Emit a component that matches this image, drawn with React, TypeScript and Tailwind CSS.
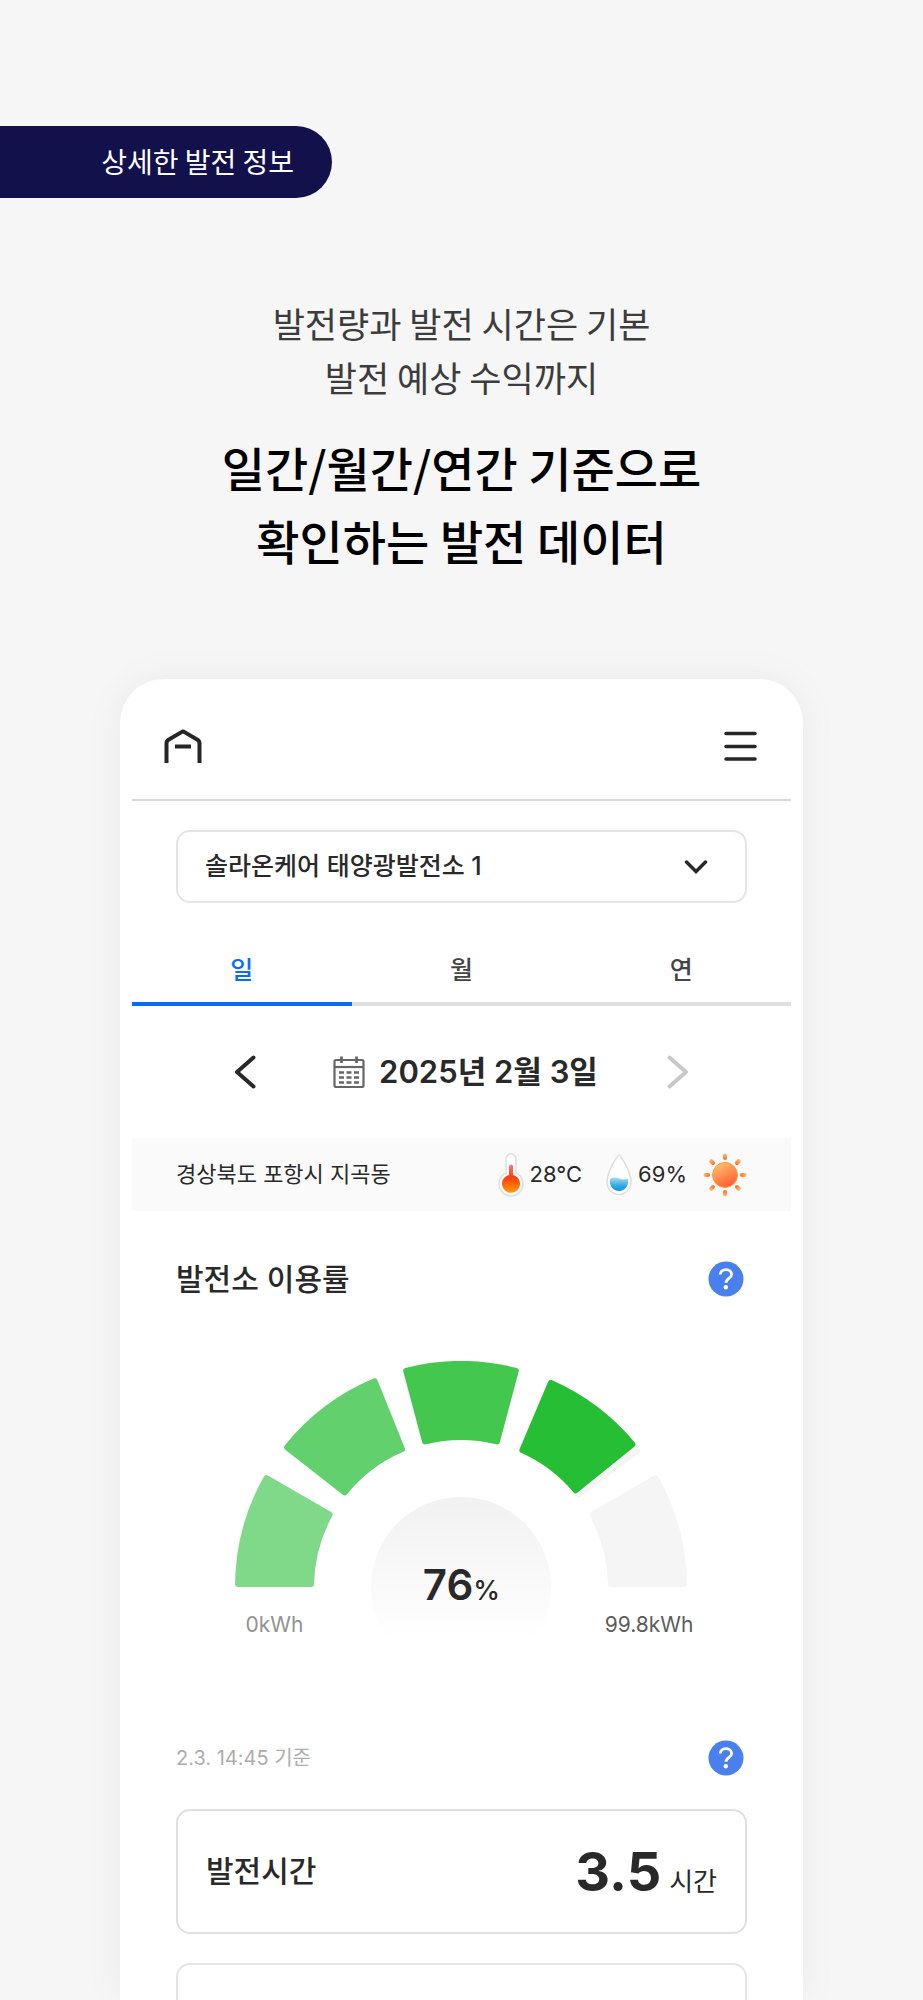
import React, { useState } from 'react';

type Period = 'day' | 'month' | 'year';

const PERIODS: { id: Period; label: string }[] = [
  { id: 'day', label: '일' },
  { id: 'month', label: '월' },
  { id: 'year', label: '연' },
];

interface Segment {
  from: number;
  to: number;
  color: string;
}

// angles in degrees, 0 = left end of the gauge, 180 = right end
const SEGMENTS: Segment[] = [
  { from: 0, to: 30, color: '#7fd989' },
  { from: 38, to: 68, color: '#62d16d' },
  { from: 75, to: 105, color: '#43c74f' },
  { from: 113, to: 143, color: '#f5f5f5' },
  { from: 113, to: 141, color: '#25be34' },
  { from: 150, to: 180, color: '#f5f5f5' },
];

const CX = 226;
const CY = 226;
const OUTER = 226;
const INNER = 147;
const ROUND = 3;

const point = (radius: number, degrees: number) => {
  const a = (degrees * Math.PI) / 180;
  return `${(CX - radius * Math.cos(a)).toFixed(2)} ${(CY - radius * Math.sin(a)).toFixed(2)}`;
};

// Segment outline pulled in by ROUND, the round-joined stroke fills it back out
const segmentPath = ({ from, to }: Segment) => {
  const ro = OUTER - ROUND;
  const ri = INNER + ROUND;
  const dOuter = (Math.asin(ROUND / ro) * 180) / Math.PI;
  const dInner = (Math.asin(ROUND / ri) * 180) / Math.PI;
  return [
    `M${point(ro, from + dOuter)}`,
    `A${ro} ${ro} 0 0 1 ${point(ro, to - dOuter)}`,
    `L${point(ri, to - dInner)}`,
    `A${ri} ${ri} 0 0 0 ${point(ri, from + dInner)}`,
    'Z',
  ].join(' ');
};

const HomeIcon = () => (
  <svg className="h-9 w-10" viewBox="0 0 40 36" fill="none" stroke="#262626" strokeWidth="4" strokeLinejoin="round">
    <path d="M3.5 35V15.5Q3.5 13 5.5 11.8L18.5 4.1Q20 3.2 21.5 4.1L34.5 11.8Q36.5 13 36.5 15.5V35" />
    <path d="M12 18.5H28" />
  </svg>
);

const MenuIcon = () => (
  <svg className="h-8 w-9" viewBox="0 0 36 32" fill="none" stroke="#262626" strokeWidth="3.5" strokeLinecap="round">
    <path d="M2 3.5H31M2 16.5H31M2 29H31" />
  </svg>
);

const CalendarIcon = () => (
  <svg className="h-8 w-8" viewBox="0 0 32 32" fill="none" stroke="#666" strokeWidth="2.2">
    <rect x="1.5" y="4" width="29" height="27" rx="1.5" />
    <path d="M1.5 11H30.5" />
    <path d="M8.5 0.5V7M23.5 0.5V7" strokeWidth="2.8" />
    <path d="M6 16.5H11M13.5 16.5H18.5M21 16.5H26M6 21.5H11M13.5 21.5H18.5M21 21.5H26M6 26.5H11M13.5 26.5H18.5M21 26.5H26" strokeWidth="2.6" />
  </svg>
);

const ThermometerIcon = () => (
  <svg className="h-11 w-[26px]" viewBox="0 0 26 44">
    <defs>
      <linearGradient id="heat" x1="0" y1="0" x2="0" y2="1">
        <stop offset="0" stopColor="#ff7a70" />
        <stop offset="0.45" stopColor="#ff3b14" />
        <stop offset="1" stopColor="#ff9d00" />
      </linearGradient>
    </defs>
    <path d="M8 20V6A5 5 0 0 1 18 6V20A12 12 0 1 1 8 20Z" fill="#fff" stroke="#dedede" strokeWidth="1.5" />
    <path d="M11 22V13.5A2 2 0 0 1 15 13.5V22A9 9 0 1 1 11 22Z" fill="url(#heat)" />
  </svg>
);

const DropIcon = () => (
  <svg className="block h-11 w-[26px]" viewBox="0 0 26 44">
    <defs>
      <linearGradient id="water" x1="0" y1="0" x2="0" y2="1">
        <stop offset="0" stopColor="#a5dcf3" />
        <stop offset="0.6" stopColor="#2fa9e6" />
        <stop offset="1" stopColor="#1596e0" />
      </linearGradient>
    </defs>
    <path d="M13 2C14 2 25 18 25 29A12 12.5 0 0 1 1 29C1 18 12 2 13 2Z" fill="#fff" stroke="#dedede" strokeWidth="1.5" />
    <path d="M4 26Q8.5 23.5 13 25.5Q18 27.5 22 25.5C23 33 19 38 13 38S3 33 4 26Z" fill="url(#water)" />
  </svg>
);

const RAYS = [0, 45, 90, 135, 180, 225, 270, 315];

const SunIcon = () => (
  <svg className="h-11 w-11" viewBox="0 0 44 44">
    <defs>
      <linearGradient id="sun" x1="0.2" y1="0" x2="0.7" y2="1">
        <stop offset="0" stopColor="#ffc370" />
        <stop offset="1" stopColor="#ff5a30" />
      </linearGradient>
      <linearGradient id="ray" x1="0" y1="0" x2="0" y2="1">
        <stop offset="0" stopColor="#ffc080" />
        <stop offset="1" stopColor="#ff6a10" />
      </linearGradient>
    </defs>
    {RAYS.map((angle) => (
      <rect key={angle} x="20" y="0.5" width="4" height="6.5" rx="2" fill="url(#ray)" transform={`rotate(${angle} 22 22)`} />
    ))}
    <circle cx="22" cy="22" r="12.5" fill="url(#sun)" stroke="#ff9a40" />
  </svg>
);

const HelpButton = ({ label }: { label: string }) => (
  <button type="button" aria-label={label} className="mr-[3px] shrink-0">
    <svg className="h-9 w-9" viewBox="0 0 36 36" fill="none">
      <circle cx="18" cy="18" r="17.5" fill="#4a80ee" />
      <path d="M12.3 13.6C12.3 10.6 14.6 8.7 17.9 8.7C21.3 8.7 23.6 10.7 23.6 13.5C23.6 17.4 18 17.2 18 21.8" stroke="#fff" strokeWidth="2.8" />
      <circle cx="17.8" cy="26.3" r="2.2" fill="#fff" />
    </svg>
  </button>
);

const UtilizationGauge = ({ percent }: { percent: number }) => (
  <div className="mx-auto w-[460px] max-w-full pt-[60px]">
    <div className="relative px-1">
      <svg className="block w-full" viewBox="0 0 452 292">
        <defs>
          <linearGradient id="dial" x1="0" y1="0" x2="0" y2="1">
            <stop offset="0" stopColor="#f1f1f1" />
            <stop offset="0.5" stopColor="#fafafa" />
            <stop offset="0.8" stopColor="#ffffff" />
          </linearGradient>
        </defs>
        <circle cx={CX} cy={CY} r="90" fill="url(#dial)" />
        {SEGMENTS.map((segment, i) => (
          <path
            key={i}
            d={segmentPath(segment)}
            fill={segment.color}
            stroke={segment.color}
            strokeWidth={ROUND * 2}
            strokeLinejoin="round"
          />
        ))}
      </svg>
      <p className="absolute inset-x-0 bottom-9 text-center text-[42px] leading-[52px] font-semibold">
        {percent}
        <span className="text-[27px] font-medium">%</span>
      </p>
      <div className="absolute inset-x-0 bottom-[14px] flex justify-between text-[21px] leading-7">
        <span className="ml-[14px] text-[#929292]">0kWh</span>
        <span className="-mr-[2px] text-[#5c5c5c]">99.8kWh</span>
      </div>
    </div>
  </div>
);

export default function App() {
  const [period, setPeriod] = useState<Period>('day');

  return (
    <main className="flex min-h-screen flex-col overflow-hidden bg-[#f6f6f6] font-['Noto_Sans_CJK_KR',sans-serif] text-black">
      <div className="mt-[126px] flex h-[72px] w-[332px] items-center justify-end rounded-r-full bg-[#12114c] pr-[38px] pb-[2px] text-[28px] text-white">
        상세한 발전 정보
      </div>

      <header className="mt-[98px] text-center">
        <p className="text-[35px] leading-[54px] text-[#3c3c3c]">
          발전량과 발전 시간은 기본
          <br />
          발전 예상 수익까지
        </p>
        <h1 className="mt-[26px] text-[47px] leading-[73px] font-medium">
          일간/월간/연간 기준으로
          <br />
          확인하는 발전 데이터
        </h1>
      </header>

      <section className="mx-auto mt-[103px] flex w-[74%] flex-1 flex-col rounded-t-[44px] bg-white px-3 font-['Inter','Noto_Sans_CJK_KR',sans-serif] text-[#292929] shadow-[0_0_40px_rgba(0,0,0,0.05)]">
        <div className="flex h-[122px] items-center justify-between border-b-2 border-[#d9d9d9] px-[31px] pt-[14px]">
          <a href="#home" aria-label="홈">
            <HomeIcon />
          </a>
          <button type="button" aria-label="메뉴">
            <MenuIcon />
          </button>
        </div>

        <div className="relative mx-11 mt-[29px]">
          <select
            aria-label="발전소 선택"
            className="h-[73px] w-full appearance-none rounded-[14px] border-2 border-[#e5e5e5] bg-white pl-[27px] text-[25px] font-medium"
          >
            <option>솔라온케어 태양광발전소 1</option>
          </select>
          <svg className="pointer-events-none absolute top-[30px] right-[39px] h-[14px] w-6" viewBox="0 0 24 14" fill="none" stroke="#292929" strokeWidth="3.5" strokeLinecap="round">
            <path d="M2.5 2L12 11.5L21.5 2" />
          </svg>
        </div>

        <div role="tablist" className="mt-9 grid grid-cols-3">
          {PERIODS.map(({ id, label }) => (
            <button
              key={id}
              type="button"
              role="tab"
              aria-selected={period === id}
              onClick={() => setPeriod(id)}
              className={`h-[67px] border-b-4 text-[25px] font-medium ${
                period === id ? 'border-[#0a6cff] text-[#0a6cff]' : 'border-[#e0e0e0] text-[#444]'
              }`}
            >
              {label}
            </button>
          ))}
        </div>

        <div className="flex h-[132px] items-center justify-between px-[101px]">
          <button type="button" aria-label="이전 날짜">
            <svg className="h-9 w-6" viewBox="0 0 24 36" fill="none" stroke="#292929" strokeWidth="4" strokeLinecap="round" strokeLinejoin="round">
              <path d="M20.5 3.5L4 18L20.5 32.5" />
            </svg>
          </button>
          <button type="button" className="flex items-center gap-[14px] pl-2 text-[31px] font-semibold whitespace-nowrap">
            <CalendarIcon />
            2025년 2월 3일
          </button>
          <button type="button" aria-label="다음 날짜">
            <svg className="h-9 w-6" viewBox="0 0 24 36" fill="none" stroke="#c8c8c8" strokeWidth="4" strokeLinecap="round" strokeLinejoin="round">
              <path d="M3.5 3.5L20 18L3.5 32.5" />
            </svg>
          </button>
        </div>

        <div className="flex h-[73px] items-center justify-between bg-[#fafafa] px-11 text-[22px]">
          <span>경상북도 포항시 지곡동</span>
          <div className="flex items-center">
            <ThermometerIcon />
            <span className="ml-[6px]">28°C</span>
            <span className="ml-6">
              <DropIcon />
            </span>
            <span className="mr-4 ml-[6px]">69%</span>
            <SunIcon />
          </div>
        </div>

        <div className="mx-11 mt-[46px] flex h-11 items-center justify-between">
          <h2 className="text-[30px] font-medium">발전소 이용률</h2>
          <HelpButton label="발전소 이용률 도움말" />
        </div>

        <UtilizationGauge percent={76} />

        <div className="mx-11 mt-[83px] flex h-11 items-center justify-between">
          <p className="text-[20px] text-[#adadad]">2.3. 14:45 기준</p>
          <HelpButton label="발전 현황 도움말" />
        </div>

        <div className="mx-11 mt-[29px] flex h-[125px] items-center justify-between rounded-[14px] border-2 border-[#e0e0e0] px-7">
          <h3 className="text-[30px] font-medium">발전시간</h3>
          <p className="flex items-baseline gap-2">
            <span className="text-[54px] font-bold">3.5</span>
            <span className="text-[26px]">시간</span>
          </p>
        </div>

        <div className="mx-11 mt-[29px] min-h-9 flex-1 rounded-t-[14px] border-2 border-b-0 border-[#e5e5e5]" />
      </section>
    </main>
  );
}
